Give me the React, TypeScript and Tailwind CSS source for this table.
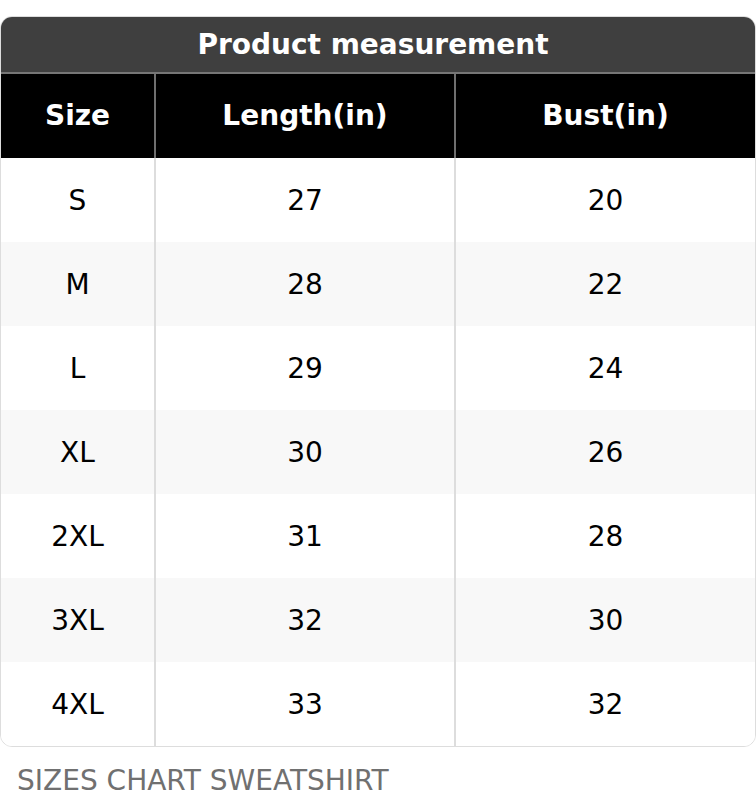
import React from 'react';

const rows = [
  ['S', '27', '20'],
  ['M', '28', '22'],
  ['L', '29', '24'],
  ['XL', '30', '26'],
  ['2XL', '31', '28'],
  ['3XL', '32', '30'],
  ['4XL', '33', '32'],
];

const font = { fontFamily: '"DejaVu Sans", Verdana, sans-serif' };

const App: React.FC = () => {
  return (
    <div className="w-[756px] bg-white pt-4" style={font}>
      <div className="rounded-xl overflow-hidden border border-[#dddddd]">
        <div className="h-[57px] bg-[#3f3f3f] border-b-2 border-[#767676] flex items-center justify-center pr-[10px] text-white font-bold text-[28px]">
          Product measurement
        </div>
        <div className="grid grid-cols-[155px_300px_1fr] h-[84px] bg-black text-white font-bold text-[28px]">
          <div className="flex items-center justify-center border-r-2 border-[#6f6f6f]">Size</div>
          <div className="flex items-center justify-center border-r-2 border-[#6f6f6f]">Length(in)</div>
          <div className="flex items-center justify-center">Bust(in)</div>
        </div>
        {rows.map((r, i) => (
          <div
            key={r[0]}
            className={`grid grid-cols-[155px_300px_1fr] h-[84px] text-[28px] text-black ${i % 2 === 1 ? 'bg-[#f8f8f8]' : 'bg-white'}`}
          >
            <div className="flex items-center justify-center pt-[2px] border-r-2 border-[#dddddd]">{r[0]}</div>
            <div className="flex items-center justify-center pt-[2px] border-r-2 border-[#dddddd]">{r[1]}</div>
            <div className="flex items-center justify-center pt-[2px]">{r[2]}</div>
          </div>
        ))}
      </div>
      <div className="px-[17px] pt-[16px] text-[28px] leading-[36px] text-[#707070]">SIZES CHART SWEATSHIRT</div>
    </div>
  );
};

export default App;
